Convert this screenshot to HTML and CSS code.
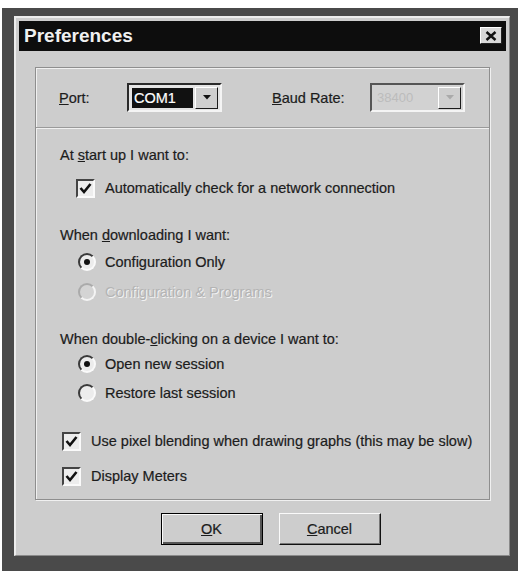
FILE: index.html
```html
<!DOCTYPE html>
<html>
<head>
<meta charset="utf-8">
<link rel="stylesheet" href="styles.css">
</head>
<body>
<div class="desk">
  <div class="window">
    <div class="titlebar">
      <span class="title">Preferences</span>
      <div class="close">
        <svg width="12" height="10" viewBox="0 0 12 10"><path d="M1.5 1 L10.5 9 M10.5 1 L1.5 9" stroke="#111" stroke-width="2.4" fill="none"/></svg>
      </div>
    </div>
    <div class="panel">
      <div class="portrow">
        <span class="lbl-port"><u>P</u>ort:</span>
        <div class="combo">
          <span class="sel">COM1</span>
          <div class="dd"><svg width="8" height="5" viewBox="0 0 8 5"><path d="M0 0 H8 L4 4.5 Z" fill="#111"/></svg></div>
        </div>
        <span class="lbl-baud"><u>B</u>aud Rate:</span>
        <div class="combo disabled">
          <span class="val">38400</span>
          <div class="dd"><svg width="8" height="5" viewBox="0 0 8 5"><path d="M0 0 H8 L4 4.5 Z" fill="#aaa"/></svg></div>
        </div>
      </div>
      <div class="options">
        <div class="heading">At <u>s</u>tart up I want to:</div>
        <div class="item cb-indent m11"><span class="check"><svg width="15" height="15" viewBox="0 0 15 15"><path d="M2.5 7 L6 11 L12.5 3" stroke="#111" stroke-width="2.6" fill="none"/></svg></span>Automatically check for a network connection</div>
        <div class="heading m25">When <u>d</u>ownloading I want:</div>
        <div class="item rb-indent m5"><span class="radio"><span class="dot"></span></span>Configuration Only</div>
        <div class="item rb-indent m8 dis"><span class="radio off"></span>Configuration &amp; Programs</div>
        <div class="heading m25">When double-<u>c</u>licking on a device I want to:</div>
        <div class="item rb-indent m3"><span class="radio"><span class="dot"></span></span>Open new session</div>
        <div class="item rb-indent m7"><span class="radio"></span>Restore last session</div>
        <div class="item cb2-indent m26"><span class="check"><svg width="15" height="15" viewBox="0 0 15 15"><path d="M2.5 7 L6 11 L12.5 3" stroke="#111" stroke-width="2.6" fill="none"/></svg></span>Use pixel blending when drawing graphs (this may be slow)</div>
        <div class="item cb2-indent m13"><span class="check"><svg width="15" height="15" viewBox="0 0 15 15"><path d="M2.5 7 L6 11 L12.5 3" stroke="#111" stroke-width="2.6" fill="none"/></svg></span>Display Meters</div>
      </div>
    </div>
    <div class="buttons">
      <div class="btn default"><u>O</u>K</div>
      <div class="btn"><u>C</u>ancel</div>
    </div>
  </div>
</div>
</body>
</html>
```

FILE: styles.css
```css
* { box-sizing: border-box; }
body {
  margin: 0;
  background: #fff;
  font-family: "Liberation Sans", Arial, sans-serif;
  font-size: 14.5px;
  color: #1c1c1c;
  -webkit-text-stroke: 0.2px #1c1c1c;
}
.desk {
  margin: 8px 0 0 2px;
  width: 516px;
  height: 563px;
  background: #4a4a4a;
  padding: 8px 0 0 12px;
}
.window {
  width: 496px;
  background: #cdcdcd;
  border-top: 2px solid #ededed;
  border-left: 2px solid #ededed;
  border-right: 1px solid #8a8a8a;
  border-bottom: 1px solid #8a8a8a;
  padding: 3px 3px 10px 3px;
  display: flex;
  flex-direction: column;
}
.titlebar {
  height: 30px;
  background: #0d0d0d;
  display: flex;
  align-items: center;
  justify-content: space-between;
  padding: 0 4px 0 5px;
}
.title {
  color: #f0f0f0;
  font-weight: bold;
  font-size: 19px;
  -webkit-text-stroke: 0;
}
.close {
  width: 22px;
  height: 17px;
  margin-top: -1px;
  background: #d8d8d8;
  border: 1px solid;
  border-color: #fff #222 #222 #fff;
  display: flex;
  align-items: center;
  justify-content: center;
}
.panel {
  margin: 16px 16px 0 16px;
  height: 433px;
  border: 1px solid #8e8e8e;
  box-shadow: inset 1px 1px 0 #f0f0f0, 1px 1px 0 #f0f0f0;
  display: flex;
  flex-direction: column;
}
.portrow {
  height: 60px;
  display: flex;
  align-items: center;
  padding-left: 23px;
  border-bottom: 1px solid #9a9a9a;
  box-shadow: 0 1px 0 #f0f0f0;
}
.lbl-port { width: 68px; }
.lbl-baud { width: 98px; margin-left: 50px; }
.combo {
  width: 95px;
  height: 29px;
  border: 2px solid;
  border-color: #2a2a2a #f4f4f4 #f4f4f4 #2a2a2a;
  background: #e4e4e4;
  display: flex;
  align-items: center;
  justify-content: space-between;
  padding: 0 2px 0 3px;
}
.sel {
  background: #111;
  color: #fff;
  -webkit-text-stroke: 0.2px #fff;
  width: 61px;
  height: 20px;
  line-height: 20px;
  padding-left: 2px;
}
.combo.disabled {
  background: #d2d2d2;
  border-color: #555 #f4f4f4 #f4f4f4 #555;
}
.val {
  color: #bcbcbc;
  -webkit-text-stroke: 0;
  padding-left: 2px;
  font-size: 13px;
}
.dd {
  width: 23px;
  height: 22px;
  background: #cfcfcf;
  border: 1px solid;
  border-color: #fff #1a1a1a #1a1a1a #fff;
  display: flex;
  align-items: center;
  justify-content: center;
}
.options {
  display: flex;
  flex-direction: column;
  padding: 16px 0 0 24px;
}
.heading {
  height: 22px;
  line-height: 22px;
}
.item {
  height: 22px;
  display: flex;
  align-items: center;
}
.cb-indent { margin-left: 16px; }
.rb-indent { margin-left: 18px; }
.cb2-indent { margin-left: 2px; }
.check {
  width: 19px;
  height: 19px;
  margin-right: 10px;
  background: #ededed;
  border: 2px solid;
  border-color: #444 #fafafa #fafafa #444;
  display: flex;
  align-items: center;
  justify-content: center;
}
.radio {
  width: 18px;
  height: 18px;
  margin-right: 9px;
  border-radius: 50%;
  background: #ececec;
  border: 2px solid;
  border-color: #3a3a3a #fafafa #fafafa #3a3a3a;
  display: flex;
  align-items: center;
  justify-content: center;
}
.radio.off {
  background: #d4d4d4;
  border-color: #aaa #f4f4f4 #f4f4f4 #aaa;
}
.dot {
  width: 6px;
  height: 6px;
  border-radius: 50%;
  background: #111;
}
.dis {
  color: #b4b4b4;
  -webkit-text-stroke: 0;
  text-shadow: 1px 1px 0 #f2f2f2;
}
.m3 { margin-top: 3px; }
.m5 { margin-top: 5px; }
.m7 { margin-top: 7px; }
.m8 { margin-top: 8px; }
.m11 { margin-top: 11px; }
.m13 { margin-top: 13px; }
.m25 { margin-top: 25px; }
.m26 { margin-top: 26px; }
.buttons {
  margin-top: 13px;
  display: flex;
  justify-content: center;
  gap: 16px;
  padding-left: 16px;
}
.btn {
  width: 102px;
  height: 32px;
  display: flex;
  align-items: center;
  justify-content: center;
  background: #cdcdcd;
  border: 1px solid;
  border-color: #fafafa #111 #111 #fafafa;
  box-shadow: inset -1px -1px 0 #777;
}
.btn.default {
  border: 1px solid #000;
  box-shadow: inset 1px 1px 0 #fafafa, inset -2px -2px 0 #555;
}
```
